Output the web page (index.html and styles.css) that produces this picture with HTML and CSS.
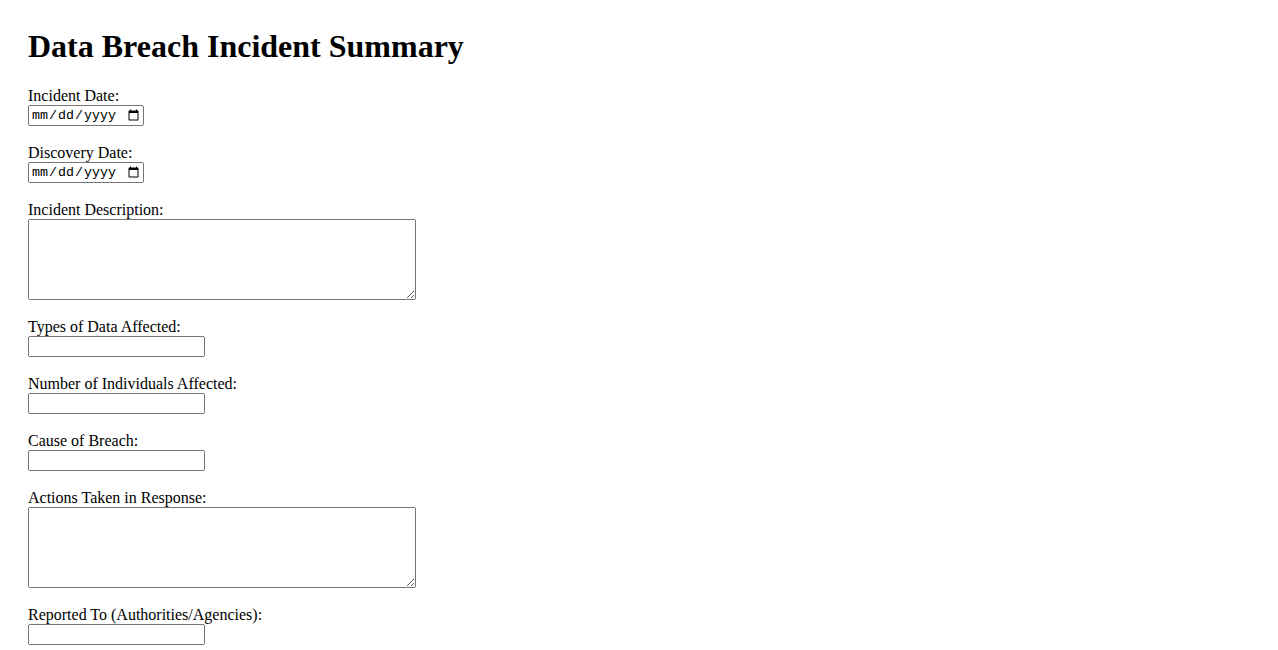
FILE: index.html
```html
<!DOCTYPE html>
<html lang="en">
<head>
<meta charset="utf-8">
<title>Data Breach Incident Summary</title>
<link rel="stylesheet" href="styles.css">
</head>
<body>
<form class="report">
<h1 class="title">Data Breach Incident Summary</h1>
<label class="lbl" for="incidentDate">Incident Date:</label><br>
<input class="date" type="date" id="incidentDate"><br><br>
<label class="lbl" for="discoveryDate">Discovery Date:</label><br>
<input class="date" type="date" id="discoveryDate"><br><br>
<label class="lbl" for="desc">Incident Description:</label><br>
<textarea class="area" id="desc"></textarea><br><br>
<label class="lbl" for="types">Types of Data Affected:</label><br>
<input class="text" type="text" id="types"><br><br>
<label class="lbl" for="num">Number of Individuals Affected:</label><br>
<input class="text" type="text" id="num"><br><br>
<label class="lbl" for="cause">Cause of Breach:</label><br>
<input class="text" type="text" id="cause"><br><br>
<label class="lbl" for="actions">Actions Taken in Response:</label><br>
<textarea class="area" id="actions"></textarea><br><br>
<label class="lbl" for="reported">Reported To (Authorities/Agencies):</label><br>
<input class="text" type="text" id="reported"><br><br>
</form>
</body>
</html>
```
FILE: styles.css
```css
html, body {
  background: #fff;
}
body {
  margin: 8px;
  font-family: "Liberation Serif", "Times New Roman", serif;
  font-size: 16px;
  color: #000;
}
.report {
  padding: 20px;
}
.title {
  font-size: 32px;
  font-weight: bold;
  margin: 0 0 22.44px 0;
}
.date {
  box-sizing: border-box;
  width: 116px;
  height: 21px;
  font-family: "Liberation Mono", monospace;
  font-size: 13.33px;
}
.text {
  box-sizing: border-box;
  width: 177px;
  height: 21px;
}
.area {
  box-sizing: border-box;
  width: 388px;
  height: 81px;
  vertical-align: bottom;
}
```
